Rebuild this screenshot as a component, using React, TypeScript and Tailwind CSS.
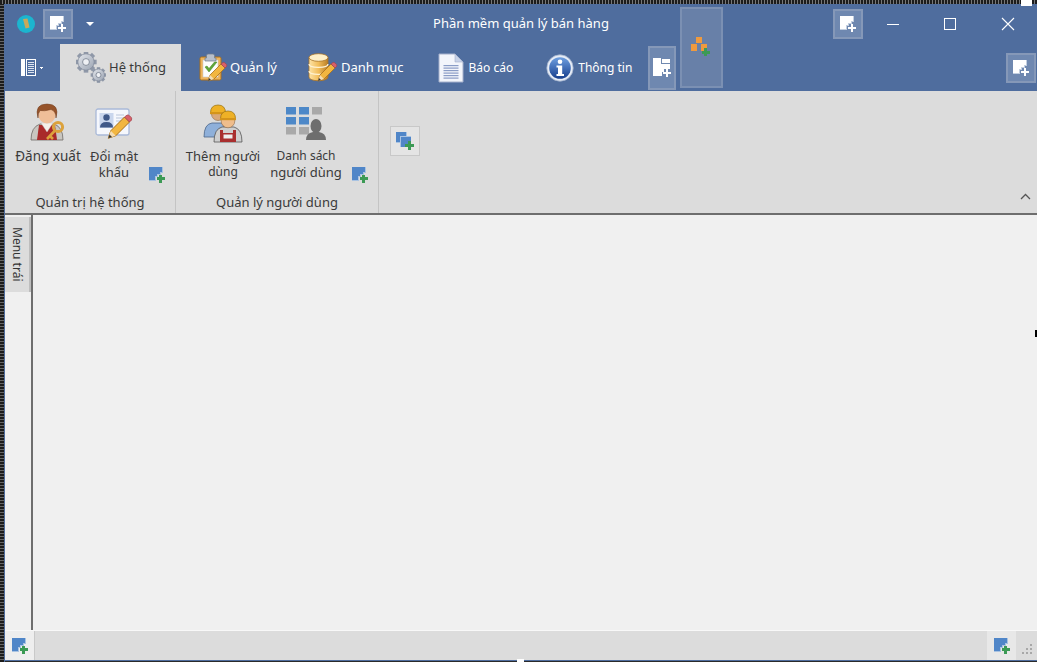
import React from "react";

function Ph({ fill = "#fff", tint = "#c3cfe0", plus = "#fff", t = 2 }: { fill?: string; tint?: string; plus?: string; t?: number }) {
  const c = 11.5;
  return (
    <svg width={16} height={16} viewBox="0 0 16 16" shapeRendering="crispEdges" className="block shrink-0">
      <path d="M0 0H14V6H12V8H9V10H7V14H0Z" fill={tint} />
      <path d="M0 0H13V5H11V7H8V9H6V13H0Z" fill={fill} />
      <rect x={c - t / 2} y={7.5} width={t} height={8} fill={plus} />
      <rect x={7.5} y={c - t / 2} width={8} height={t} fill={plus} />
    </svg>
  );
}

function BluePh() {
  return <Ph fill="#5086c8" tint="#a9c3e2" plus="#3c9a55" t={3} />;
}

function Gears() {
  const gear = (cx: number, cy: number, r: number, id: string) => {
    const teeth = Array.from({ length: 8 }, (_, i) => i * 45);
    return (
      <g key={id}>
        {teeth.map((a) => (
          <rect key={a} x={cx - r * 0.24} y={cy - r * 1.12} width={r * 0.48} height={r * 0.5} fill="#8f98a8" transform={`rotate(${a} ${cx} ${cy})`} />
        ))}
        <circle cx={cx} cy={cy} r={r * 0.86} fill="url(#gearG)" stroke="#7f8899" strokeWidth="0.7" />
        <circle cx={cx} cy={cy} r={r * 0.36} fill="#eef0f4" stroke="#737c8c" strokeWidth="0.8" />
      </g>
    );
  };
  return (
    <svg width="30" height="31" viewBox="0 0 30 31" className="block shrink-0">
      <defs>
        <linearGradient id="gearG" x1="0" y1="0" x2="1" y2="1">
          <stop offset="0" stopColor="#e4e7ec" />
          <stop offset="1" stopColor="#9aa3b2" />
        </linearGradient>
      </defs>
      {gear(10, 10, 9.5, "a")}
      {gear(22.5, 23, 7, "b")}
    </svg>
  );
}

function Pencil({ x = 0, y = 0, s = 1 }: { x?: number; y?: number; s?: number }) {
  return (
    <g transform={`translate(${x} ${y}) scale(${s})`}>
      <path d="M1 19 L3 13 L14 2 L18 6 L7 17 Z" fill="#f2b640" stroke="#a8701c" strokeWidth="0.8" />
      <path d="M14 2 L16 0.5 Q17 0 18 1 L19.5 2.5 Q20 3.5 19.5 4.5 L18 6 Z" fill="#d8606a" stroke="#a04048" strokeWidth="0.6" />
      <path d="M1 19 L3 13 L7 17 Z" fill="#f3dcb4" />
      <path d="M1 19 L2 16 L4 18 Z" fill="#333" />
    </g>
  );
}

function Clipboard() {
  return (
    <svg width="30" height="30" viewBox="0 0 30 30" className="block shrink-0">
      <rect x="1" y="4" width="21" height="23" rx="1.5" fill="#efb45a" stroke="#a9711f" />
      <rect x="4" y="7" width="15" height="17" fill="#fdfdfb" stroke="#c9cdd3" strokeWidth="0.6" />
      <path d="M7.5 5 V2.5 Q7.5 1 9 1 H14 Q15.5 1 15.5 2.5 V5 H17 V8 H6 V5Z" fill="#b7bfcb" stroke="#6f7a8a" strokeWidth="0.7" />
      <path d="M6 14 L10 19 L18 9 L15.5 9 L10 15.5 L8 13 Z" fill="#5fa838" stroke="#3f7e22" strokeWidth="0.5" />
      <Pencil x={8} y={9} />
    </svg>
  );
}

function Database() {
  return (
    <svg width="30" height="30" viewBox="0 0 30 30" className="block shrink-0">
      <defs>
        <linearGradient id="dbG" x1="0" y1="0" x2="1" y2="0">
          <stop offset="0" stopColor="#fde3a6" />
          <stop offset="0.5" stopColor="#f2bd5a" />
          <stop offset="1" stopColor="#b97e26" />
        </linearGradient>
      </defs>
      <path d="M1 4.5 V24 C1 29 20 29 20 24 V4.5 Z" fill="url(#dbG)" stroke="#a8742a" strokeWidth="0.8" />
      <ellipse cx="10.5" cy="4.5" rx="9.5" ry="3.8" fill="#fff0c8" stroke="#a8742a" strokeWidth="0.8" />
      <path d="M1 11 C1 15.5 20 15.5 20 11 M1 18 C1 22.5 20 22.5 20 18" fill="none" stroke="#fff2d2" strokeWidth="1.3" />
      <Pencil x={9} y={9} />
    </svg>
  );
}

function Doc() {
  return (
    <svg width="26" height="30" viewBox="0 0 26 30" className="block shrink-0">
      <path d="M1 1 H17 L25 9 V29 H1 Z" fill="#f3f5fb" stroke="#a5b0cb" />
      <path d="M17 1 V9 H25 Z" fill="#c8d2e8" stroke="#a5b0cb" strokeWidth="0.6" />
      {[12, 14.5, 17, 19.5, 22, 24.5].map((y) => (
        <rect key={y} x="5.5" y={y} width="15" height="1.2" fill="#8a9cc6" />
      ))}
    </svg>
  );
}

function Info() {
  return (
    <svg width="28" height="28" viewBox="0 0 28 28" className="block shrink-0">
      <defs>
        <linearGradient id="infoG" x1="0" y1="0" x2="0" y2="1">
          <stop offset="0" stopColor="#6f9fe0" />
          <stop offset="1" stopColor="#173f8e" />
        </linearGradient>
      </defs>
      <circle cx="14" cy="14" r="13.2" fill="#e6ecf6" stroke="#9fb0cc" strokeWidth="0.8" />
      <circle cx="14" cy="14" r="10.8" fill="url(#infoG)" />
      <circle cx="14" cy="7.8" r="2.3" fill="#fff" />
      <path d="M10.5 11.5 H16.2 V20 H18 V22 H10.5 V20 H12 V13.5 H10.5 Z" fill="#fff" />
    </svg>
  );
}

function Account() {
  return (
    <svg width="36" height="38" viewBox="0 0 36 38" className="block shrink-0">
      <path d="M1 37 Q1 24 10 21 L24 21 Q33 24 33 37 Z" fill="#c9c6c0" stroke="#6e6a66" strokeWidth="0.8" />
      <path d="M7 37 L9 22 L25 22 L27 37 Z" fill="#a92a2a" />
      <path d="M11 20 L17 29 L23 20 Z" fill="#f4f0ea" stroke="#bbb" strokeWidth="0.4" />
      <circle cx="17" cy="12" r="8.5" fill="#efbe98" />
      <path d="M8 15 Q4 1 17 1 Q30 1 26 15 Q26 8 21 6.5 Q14 8.5 10 7.5 Q8 10 8 15Z" fill="#96532a" stroke="#6e3a1c" strokeWidth="0.5" />
      <circle cx="28" cy="24" r="4.6" fill="none" stroke="#dca23c" strokeWidth="3" />
      <path d="M25 27.5 L17 36 M20 33 L23 36" stroke="#dca23c" strokeWidth="2.6" fill="none" />
    </svg>
  );
}

function IdCard() {
  return (
    <svg width="38" height="35" viewBox="0 0 38 35" className="block shrink-0">
      <rect x="1" y="1" width="33" height="26" rx="2" fill="#f5f7fc" stroke="#a9b9d8" strokeWidth="1.3" />
      <rect x="4.5" y="5" width="14" height="15" fill="#c9d6ed" />
      <circle cx="11.5" cy="9.5" r="3.2" fill="#3f5888" />
      <path d="M5 19.5 Q5 14 11.5 14 Q18 14 18 19.5 Z" fill="#3f5888" />
      <path d="M21 7 H29 M21 10 H29 M21 13 H26" stroke="#b9c5da" strokeWidth="1" />
      <Pencil x={12} y={6.5} s={1.25} />
    </svg>
  );
}

function Workers() {
  return (
    <svg width="40" height="39" viewBox="0 0 40 39" className="block shrink-0">
      <path d="M1 33 Q1 20 9 19 H18 Q22 20 22 33 Z" fill="#8fb0da" stroke="#4d6688" strokeWidth="0.8" />
      <circle cx="15" cy="10" r="6.5" fill="#d9a878" stroke="#8f6a48" strokeWidth="0.6" />
      <path d="M7.5 9 Q7.5 1 15 1 Q22.5 1 22.5 9 Z" fill="#eeb126" stroke="#96700f" strokeWidth="0.7" />
      <rect x="7" y="8" width="16" height="2.2" fill="#d4941a" />
      <path d="M11 38 Q11 25 19 23 H31 Q39 25 39 38 Z" fill="#cfcfcf" stroke="#555" strokeWidth="0.8" />
      <path d="M17 38 V26 H20 V29 H30 V26 H33 V38 Z" fill="#a92f2f" />
      <rect x="20.5" y="30.5" width="9" height="4" fill="#eee" />
      <circle cx="25" cy="17" r="6.8" fill="#efbd8c" stroke="#8f6a48" strokeWidth="0.6" />
      <path d="M17.5 15 Q17.5 7 25 7 Q32.5 7 32.5 15 Z" fill="#eeb126" stroke="#96700f" strokeWidth="0.7" />
      <rect x="17" y="14" width="16" height="2.2" fill="#d4941a" />
    </svg>
  );
}

function GridPerson() {
  const c = [
    [0, 0, "#4d88c8"],
    [13, 0, "#4d88c8"],
    [26, 0, "#a9a9a9"],
    [0, 10, "#4d88c8"],
    [13, 10, "#4d88c8"],
    [0, 20, "#a9a9a9"],
    [13, 20, "#a9a9a9"],
  ] as const;
  return (
    <svg width="40" height="34" viewBox="0 0 40 34" className="block shrink-0">
      {c.map(([x, y, f]) => (
        <rect key={`${x}-${y}`} x={x} y={y} width="10" height="7.5" fill={f} />
      ))}
      <ellipse cx="30" cy="19" rx="5.5" ry="7" fill="#6e6e6e" />
      <path d="M20 33 Q20 26 27 25 H33 Q40 26 40 33 Z" fill="#6e6e6e" />
    </svg>
  );
}

function Blocks() {
  return (
    <svg width="22" height="24" viewBox="0 0 22 24" shapeRendering="crispEdges" className="block">
      <rect x="5" y="0" width="6" height="6" fill="#ef9a3e" />
      <rect x="0" y="7" width="6" height="7" fill="#ef9a3e" />
      <rect x="10" y="7" width="6" height="7" fill="#ef9a3e" />
      <rect x="13" y="11" width="3" height="8" fill="#3c9a55" />
      <rect x="10.500" y="13.500" width="8" height="3" fill="#3c9a55" />
    </svg>
  );
}

function Cascade() {
  return (
    <svg width="18" height="18" viewBox="0 0 18 18" shapeRendering="crispEdges" className="block">
      <rect x="0" y="0" width="11" height="11" fill="#a9c3e2" />
      <rect x="0" y="0" width="10" height="10" fill="#5086c8" />
      <rect x="4" y="4" width="11" height="11" fill="#a9c3e2" />
      <rect x="5" y="5" width="10" height="10" fill="#5086c8" />
      <rect x="12" y="9" width="3" height="9" fill="#3c9a55" />
      <rect x="9" y="12" width="9" height="3" fill="#3c9a55" />
    </svg>
  );
}

function Folders() {
  return (
    <svg width="18" height="19" viewBox="0 0 18 19" shapeRendering="crispEdges" className="block">
      <path d="M0 0H8V6H17V11H11V14H9V18H0Z" fill="#fff" />
      <rect x="9" y="1" width="8" height="4" fill="#fff" />
      <rect x="12.500" y="11" width="2" height="8" fill="#fff" />
      <rect x="9.500" y="14" width="8" height="2" fill="#fff" />
    </svg>
  );
}

function HeaderBox({ children, className = "" }: { children: React.ReactNode; className?: string }) {
  return (
    <div className={`flex items-center justify-center border-2 border-[#8598b8] bg-[#6f88b0] ${className}`}>{children}</div>
  );
}

function Tab({ icon, label, ml, gap, small }: { icon: React.ReactNode; label: string; ml: string; gap: string; small?: boolean }) {
  return (
    <div className={`flex h-full items-center text-white ${ml} ${gap} ${small ? "text-[12px]" : "text-[13px]"}`}>
      {icon}
      <span className="whitespace-nowrap">{label}</span>
    </div>
  );
}

function RibbonButton({ icon, lines, w, iconPt }: { icon: React.ReactNode; lines: { t: string; c: string }[]; w: string; iconPt: string }) {
  return (
    <div className={`flex flex-col items-center ${w}`}>
      <div className={`flex h-[44px] items-start justify-center ${iconPt}`}>{icon}</div>
      <div className="mt-[4px] text-center leading-[16px] text-[#3a3a3a]">
        {lines.map((l) => (
          <div key={l.t} className={`whitespace-nowrap ${l.c}`}>
            {l.t}
          </div>
        ))}
      </div>
    </div>
  );
}

export default function App() {
  return (
    <div
      className="relative flex h-[662px] w-[1037px] flex-col overflow-hidden bg-[#2a2a2a]"
      style={{ fontFamily: '"Noto Sans", "Liberation Sans", sans-serif' }}
    >
      <div className="h-1 w-full shrink-0 bg-[repeating-linear-gradient(90deg,#1c1c1c_0,#1c1c1c_2px,#777_2px,#777_3px)]" />
      <div className="flex min-h-0 flex-1">
        <div className="w-1 shrink-0 bg-[repeating-linear-gradient(0deg,#1c1c1c_0,#1c1c1c_2px,#666_2px,#666_3px)]" />
        <div className="flex min-w-0 flex-1 flex-col border-l border-[#4f6d9e]">
          {/* Title bar */}
          <div className="grid h-[40px] shrink-0 grid-cols-[1fr_auto_1fr] items-center bg-[#4f6d9e]">
            <div className="flex items-center pl-[12px]">
              <svg width="18" height="18" viewBox="0 0 18 18" className="block">
                <circle cx="9" cy="9" r="9" fill="#1cb5cf" />
                <path d="M6 4 L10.5 3.5 L12.5 12.5 L8.5 13.5 Z" fill="#c9a85a" />
              </svg>
              <HeaderBox className="ml-[8px] h-[30px] w-[30px]">
                <Ph />
              </HeaderBox>
              <svg width="8" height="4" viewBox="0 0 8 4" className="ml-[13px] block">
                <path d="M0 0H8L4 4Z" fill="#fff" />
              </svg>
            </div>
            <div className="text-[13px] text-white">Phần mềm quản lý bán hàng</div>
            <div className="flex items-center justify-end">
              <HeaderBox className="h-[30px] w-[30px]">
                <Ph />
              </HeaderBox>
              <div className="flex h-[30px] w-[58px] items-center justify-center pl-[2px]">
                <div className="h-px w-[12px] bg-white" />
              </div>
              <div className="flex h-[30px] w-[58px] items-center justify-center">
                <div className="h-[12px] w-[12px] border border-white" />
              </div>
              <div className="flex h-[30px] w-[58px] items-center justify-center">
                <svg width="14" height="14" viewBox="0 0 14 14">
                  <path d="M1 1L13 13M13 1L1 13" stroke="#fff" strokeWidth="1.1" />
                </svg>
              </div>
            </div>
          </div>
          {/* Tabs */}
          <div className="flex h-[47px] shrink-0 items-center bg-[#4f6d9e]">
            <div className="flex w-[55px] items-center pl-[16px]">
              <svg width="23" height="17" viewBox="0 0 23 17" shapeRendering="crispEdges" className="block">
                <rect x="0" y="0" width="4" height="17" fill="#fff" />
                <rect x="5.500" y="0.500" width="9" height="16" fill="none" stroke="#fff" />
                <path d="M7 3H13M7 5H13M7 7H13M7 9H13M7 11H13M7 13H13" stroke="#dfe5ef" />
                <path d="M18 8H22L20 10Z" fill="#fff" />
              </svg>
            </div>
            <div className="flex h-full w-[121px] items-center gap-[3px] bg-[#dcdcdc] pl-[16px] text-[13px] text-[#3a3a3a]">
              <Gears />
              <span className="whitespace-nowrap">Hệ thống</span>
            </div>
            <Tab icon={<Clipboard />} label="Quản lý" ml="ml-[18px]" gap="gap-[1px]" />
            <Tab icon={<Database />} label="Danh mục" ml="ml-[31px]" gap="gap-[3px]" />
            <Tab icon={<Doc />} label="Báo cáo" ml="ml-[34px]" gap="gap-[5px]" small />
            <Tab icon={<Info />} label="Thông tin" ml="ml-[33px]" gap="gap-[4px]" small />
            <HeaderBox className="ml-[16px] h-[44px] w-[28px]">
              <Folders />
            </HeaderBox>
            <div className="ml-auto pr-[1px]">
              <HeaderBox className="h-[30px] w-[30px]">
                <Ph />
              </HeaderBox>
            </div>
          </div>
          {/* Ribbon */}
          <div className="flex h-[122px] shrink-0 bg-[#dcdcdc]">
            <div className="flex w-[171px] shrink-0 flex-col border-r border-[#c4c4c4] pt-[9px]">
              <div className="flex h-[93px] items-start">
                <RibbonButton icon={<Account />} lines={[{ t: "Đăng xuất", c: "text-[13.5px]" }]} w="w-[86px]" iconPt="pt-[3px]" />
                <RibbonButton icon={<IdCard />} lines={[{ t: "Đổi mật", c: "text-[13px]" }, { t: "khẩu", c: "text-[13px]" }]} w="w-[46px]" iconPt="pt-[8px]" />
                <div className="ml-[12px] mt-[67px]">
                  <BluePh />
                </div>
              </div>
              <div className="text-center text-[13px] leading-[18px] text-[#3a3a3a]">Quản trị hệ thống</div>
            </div>
            <div className="flex w-[203px] shrink-0 flex-col border-r border-[#c4c4c4] pt-[9px]">
              <div className="flex h-[93px] items-start">
                <RibbonButton icon={<Workers />} lines={[{ t: "Thêm người", c: "text-[13px]" }, { t: "dùng", c: "text-[12px]" }]} w="w-[94px]" iconPt="pt-[4px]" />
                <RibbonButton icon={<GridPerson />} lines={[{ t: "Danh sách", c: "text-[12px]" }, { t: "người dùng", c: "text-[13px]" }]} w="w-[72px]" iconPt="pt-[7px]" />
                <div className="ml-[10px] mt-[67px]">
                  <BluePh />
                </div>
              </div>
              <div className="text-center text-[13px] leading-[18px] text-[#3a3a3a]">Quản lý người dùng</div>
            </div>
            <div className="flex flex-1 flex-col pl-[11px] pt-[35px]">
              <div className="flex h-[30px] w-[30px] items-center justify-center border border-[#c8c8c8] bg-[#e4e4e4]">
                <Cascade />
              </div>
              <div className="mt-[37px] flex justify-end pr-[6px]">
                <svg width="11" height="7" viewBox="0 0 11 7">
                  <path d="M1 6L5.5 1.5L10 6" fill="none" stroke="#555" strokeWidth="1.3" />
                </svg>
              </div>
            </div>
          </div>
          {/* Main */}
          <div className="flex min-h-0 flex-1 border-t-2 border-[#6e6e6e] bg-[#f0f0f0]">
            <div className="w-[26px] shrink-0 bg-[#f0f0f0] pt-[2px]">
              <div className="flex h-[75px] w-[26px] items-center justify-center border-r-2 border-[#bdbdbd] bg-[#dcdcdc] text-[12px] text-[#333] [writing-mode:vertical-rl]">
                Menu trái
              </div>
            </div>
            <div className="flex-1 border-l-2 border-[#6e6e6e] bg-[#f0f0f0]" />
          </div>
          {/* Status */}
          <div className="flex h-[30px] shrink-0 items-stretch border-t border-[#f8f8f8] bg-[#dcdcdc]">
            <div className="flex w-[30px] items-center justify-center border-r border-[#c9c9c9] bg-[#eeeeee]">
              <BluePh />
            </div>
            <div className="flex-1" />
            <div className="flex w-[29px] items-center justify-center bg-[#e8e8e8]">
              <BluePh />
            </div>
            <div className="flex w-[21px] items-end justify-center pb-[5px]">
              <svg width="12" height="12" viewBox="0 0 12 12" shapeRendering="crispEdges">
                <path d="M9 1h2v2H9ZM5 5h2v2H5ZM9 5h2v2H9ZM1 9h2v2H1ZM5 9h2v2H5ZM9 9h2v2H9Z" fill="#a8a8a8" />
              </svg>
            </div>
          </div>
          <div className="h-px shrink-0 bg-[#4f6d9e]" />
          <div className="h-px shrink-0 bg-[#2a2a2a]" />
        </div>
      </div>
      {/* Floating group button spanning both header rows */}
      <div className="absolute left-[680px] top-[7px] flex h-[81px] w-[43px] justify-center border-2 border-[#7b90b3] bg-[#6880a8] pl-[1px] pt-[28px]">
        <Blocks />
      </div>
      {/* Resize handles */}
      <div className="absolute right-[5px] top-0 h-[6px] w-[11px] bg-white" />
      <div className="absolute bottom-0 left-[517px] h-[3px] w-[7px] bg-white" />
      <div className="absolute right-0 top-[330px] h-[7px] w-[2px] bg-black" />
    </div>
  );
}
